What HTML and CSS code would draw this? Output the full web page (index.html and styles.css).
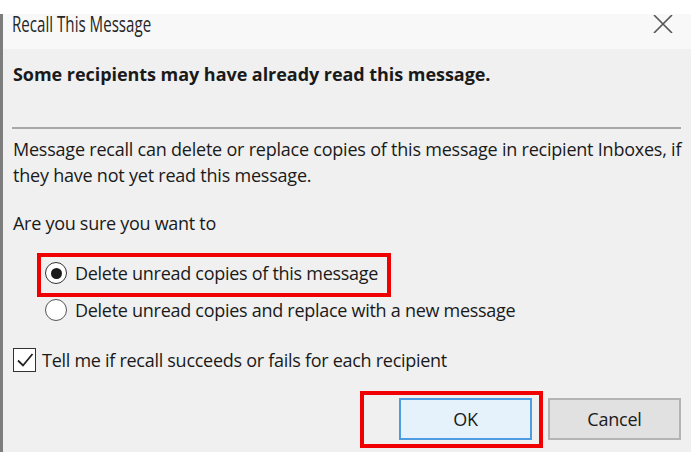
FILE: index.html
```html
<!DOCTYPE html>
<html lang="en">
<head>
<meta charset="utf-8">
<title>Recall This Message</title>
<link rel="stylesheet" href="styles.css">
</head>
<body>
<div class="window">
  <div class="titlebar">
    <div class="title">Recall This Message</div>
    <svg class="close" width="20" height="18" viewBox="0 0 20 18" aria-hidden="true">
      <path d="M1 0 L19 18 M19 0 L1 18" stroke="#555" stroke-width="1.6" fill="none"/>
    </svg>
  </div>
  <div class="content">
    <div class="warning">Some recipients may have already read this message.</div>
    <div class="separator"></div>
    <p class="info">Message recall can delete or replace copies of this message in recipient Inboxes, if they have not yet read this message.</p>
    <p class="question">Are you sure you want to</p>
    <div class="highlight highlight-radio">
      <label class="option">
        <span class="radio checked"></span>
        <span>Delete unread copies of this message</span>
      </label>
    </div>
    <label class="option option-plain">
      <span class="radio"></span>
      <span>Delete unread copies and replace with a new message</span>
    </label>
    <label class="check-row">
      <span class="checkbox">
        <svg width="18" height="16" viewBox="0 0 18 16" aria-hidden="true">
          <path d="M2 8.5 L7 13.5 L16.5 2" stroke="#222" stroke-width="1.8" fill="none"/>
        </svg>
      </span>
      <span>Tell me if recall succeeds or fails for each recipient</span>
    </label>
    <div class="buttons">
      <div class="highlight highlight-ok">
        <button class="btn btn-ok">OK</button>
      </div>
      <button class="btn btn-cancel">Cancel</button>
    </div>
  </div>
</div>
</body>
</html>
```
FILE: styles.css
```css
* { box-sizing: border-box; }
html, body {
  margin: 0;
  padding: 0;
  background: #ffffff;
  height: 100%;
  overflow: hidden;
}
body {
  font-family: "Open Sans", "Noto Sans", sans-serif;
  color: #1a1a1a;
  font-size: 18px;
  letter-spacing: -0.28px;
}
.window {
  margin-top: 14px;
  height: 438px;
  background: #f0f0f0;
  border-left: 3px solid #7d7d7d;
}
.titlebar {
  height: 35px;
  background: #f8f8f8;
  display: flex;
  justify-content: space-between;
  align-items: flex-start;
  padding-left: 9px;
  padding-right: 18px;
}
.title {
  font-size: 21px;
  line-height: 20px;
  letter-spacing: 0;
  color: #262626;
  transform: scaleX(0.72);
  transform-origin: left center;
  white-space: nowrap;
}
.close {
  margin-top: 1px;
  display: block;
}
.content {
  padding: 14px 10px 0 10px;
}
.warning {
  font-weight: 700;
  line-height: 22px;
  letter-spacing: -0.05px;
}
.separator {
  margin-top: 42px;
  height: 2px;
  background: #a8a8a8;
  margin-left: -1px;
}
.info {
  margin: 7px -8px 0 0;
  line-height: 26px;
  letter-spacing: -0.22px;
}
.question {
  margin: 22px 0 0 0;
  line-height: 26px;
}
.highlight {
  border: 4px solid #f00000;
}
.highlight-radio {
  margin-top: 17px;
  margin-left: 24px;
  width: 354px;
  height: 44px;
  padding: 0 0 4px 4px;
}
.option {
  display: flex;
  align-items: center;
  height: 32px;
  line-height: 26px;
  gap: 8px;
  white-space: nowrap;
}
.option-plain {
  height: 26px;
  margin-left: 32px;
}
.radio {
  width: 22px;
  height: 22px;
  border-radius: 50%;
  border: 1.5px solid #555;
  background: #fff;
  flex: none;
  display: flex;
  align-items: center;
  justify-content: center;
}
.radio.checked { border-color: #333; }
.radio.checked::after {
  content: "";
  width: 11px;
  height: 11px;
  border-radius: 50%;
  background: #1a1a1a;
}
.check-row {
  margin-top: 24px;
  display: flex;
  align-items: center;
  height: 26px;
  gap: 6px;
  white-space: nowrap;
}
.checkbox {
  width: 23px;
  height: 24px;
  border: 1.5px solid #333;
  background: #fff;
  flex: none;
  display: flex;
  align-items: center;
  justify-content: center;
}
.checkbox svg { display: block; }
.buttons {
  margin-top: 18px;
  display: flex;
  justify-content: flex-end;
  align-items: flex-start;
}
.highlight-ok {
  width: 183px;
  height: 57px;
  padding: 3px 7px 4px 35px;
}
.btn {
  font-family: inherit;
  font-size: 18px;
  letter-spacing: -0.2px;
  color: #1a1a1a;
  width: 133px;
  height: 42px;
  padding: 0;
  margin: 0;
}
.btn-ok {
  background: #e5f1fb;
  border: 2px solid #4d9be0;
}
.btn-cancel {
  margin-top: 7px;
  margin-left: 5px;
  background: #e1e1e1;
  border: 2px solid #b4b4b4;
}
```
